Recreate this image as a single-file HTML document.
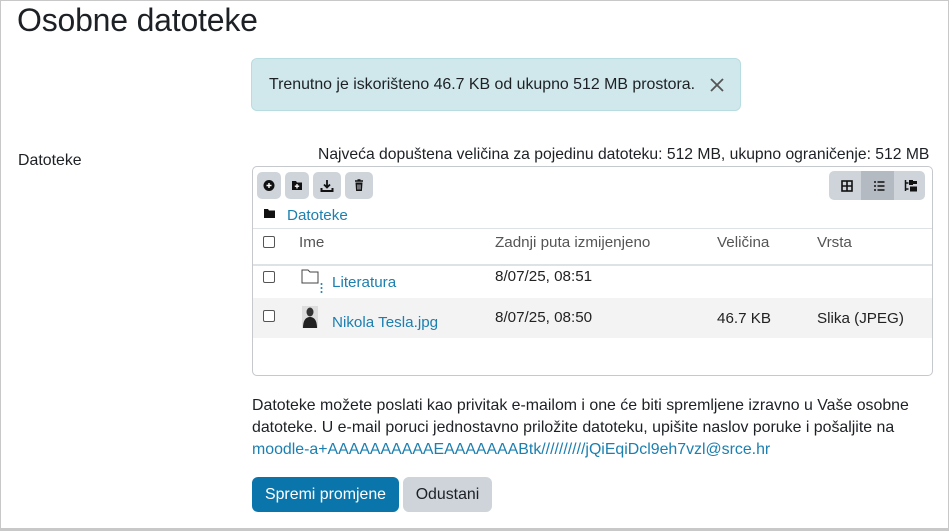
<!DOCTYPE html>
<html><head><meta charset="utf-8"><style>
body{margin:0;width:949px;height:531px;overflow:hidden;font-family:"Liberation Sans",sans-serif;color:#1d2125;background:#fff}
.frame{position:absolute;left:0;top:0;width:947px;height:527px;border:1px solid #c8c8c8;border-bottom:3px solid #c8c8c8}
.abs{position:absolute;white-space:nowrap}
h1{position:absolute;left:17px;top:2px;margin:0;font-weight:400;font-size:32px;letter-spacing:-0.2px}
.alert{position:absolute;left:251px;top:58px;width:490px;height:53px;background:#d0e8eb;border:1px solid #b7dde2;border-radius:6px;box-sizing:border-box}
.fm{position:absolute;left:252px;top:166px;width:681px;height:210px;border:1px solid #c5c8cc;border-radius:5px;box-sizing:border-box}
.btn{position:absolute;top:5px;width:24px;height:27px;background:#ced4da;border-radius:5px}
.cb{position:absolute;width:10px;height:10px;border:1px solid #555;border-radius:2px;background:#fff}
.link{color:#1b7fb0}
.t{font-size:15.2px;color:#222}
</style></head><body>
<div class="frame"></div>
<h1>Osobne datoteke</h1>
<div class="alert">
<div class="abs" style="left:17px;top:17px;font-size:15.9px">Trenutno je iskorišteno 46.7 KB od ukupno 512 MB prostora.</div>
<svg class="abs" style="left:458px;top:19px" width="14" height="14" viewBox="0 0 14 14"><path d="M1 1L13 13M13 1L1 13" stroke="#555" stroke-width="1.8"/></svg>
</div>
<div class="abs" style="left:18px;top:152px;font-size:15.9px">Datoteke</div>
<div class="abs" style="left:318px;top:146px;font-size:15.7px">Najveća dopuštena veličina za pojedinu datoteku: 512 MB, ukupno ograničenje: 512 MB</div>
<div class="fm">
<div class="btn" style="left:4px"><svg width="24" height="27"><circle cx="12" cy="13.5" r="5.5" fill="#111"/><path d="M12 11v5M9.5 13.5h5" stroke="#fff" stroke-width="1.4"/></svg></div>
<div class="btn" style="left:32px"><svg width="24" height="27"><path d="M7 9h4l1 1.5h5v7.5H7z" fill="#111"/><path d="M12 12v4.5M9.8 14.2h4.4" stroke="#fff" stroke-width="1.3"/></svg></div>
<div class="btn" style="left:60px;width:28px"><svg width="28" height="27"><path d="M14 8v7M11 12.5l3 3 3-3" stroke="#111" stroke-width="1.8" fill="none"/><path d="M8.5 16v3h11v-3" stroke="#111" stroke-width="2" fill="none"/></svg></div>
<div class="btn" style="left:92px;width:28px"><svg width="28" height="27"><path d="M10 9h8M12.5 8h3" stroke="#111" stroke-width="1.5"/><path d="M10.5 10.5h7l-.6 8.5h-5.8z" fill="#111"/><path d="M13 12.5v5M15 12.5v5" stroke="#ced4da"/></svg></div>
<div class="btn" style="left:576px;width:96px;top:4px;height:29px;background:#ced4da"></div>
<div class="abs" style="left:608px;top:4px;width:33px;height:29px;background:#b3bac1"></div>
<svg class="abs" style="left:588px;top:13px" width="12" height="12"><rect x="1" y="1" width="10" height="10" fill="none" stroke="#111" stroke-width="1.6"/><path d="M6 1v10M1 6h10" stroke="#111" stroke-width="1.6"/></svg>
<svg class="abs" style="left:620px;top:13px" width="12" height="12"><path d="M1 2h2M1 6h2M1 10h2M4.5 2h7M4.5 6h7M4.5 10h7" stroke="#111" stroke-width="1.5"/></svg>
<svg class="abs" style="left:651px;top:12px" width="14" height="14"><path d="M1.5 1v11M1.5 4h3M1.5 10h3" stroke="#111" stroke-width="1.5"/><rect x="5" y="1" width="4" height="5" fill="#111"/><rect x="6" y="7.5" width="7" height="5" fill="#111"/><rect x="9" y="2" width="4" height="3" fill="#111"/></svg>
<svg class="abs" style="left:11px;top:42px" width="11" height="9"><path d="M0 0h4l1 1.5h6V9H0z" fill="#111"/></svg>
<div class="abs link" style="left:34px;top:40px;font-size:15.2px">Datoteke</div>
<div class="abs" style="left:0;top:61px;width:679px;height:1px;background:#dee2e6"></div>
<div class="cb" style="left:10px;top:69px"></div>
<div class="abs t" style="left:46px;top:67px;color:#555">Ime</div>
<div class="abs t" style="left:242px;top:67px;color:#555">Zadnji puta izmijenjeno</div>
<div class="abs t" style="left:464px;top:67px;color:#555">Veličina</div>
<div class="abs t" style="left:564px;top:67px;color:#555">Vrsta</div>
<div class="abs" style="left:0;top:97px;width:679px;height:2px;background:#dee2e6"></div>
<div class="cb" style="left:10px;top:104px"></div>
<svg class="abs" style="left:48px;top:101px" width="24" height="28"><path d="M1 2h6l2 2h8v11H1z" fill="#fff" stroke="#444" stroke-width="1"/><circle cx="20.5" cy="16" r="1" fill="#1b7fb0"/><circle cx="20.5" cy="20" r="1" fill="#1b7fb0"/><circle cx="20.5" cy="24" r="1" fill="#1b7fb0"/></svg>
<div class="abs link" style="left:79px;top:107px;font-size:15.2px">Literatura</div>
<div class="abs t" style="left:242px;top:101px">8/07/25, 08:51</div>
<div class="abs" style="left:0;top:131px;width:679px;height:40px;background:#f3f3f3"></div>
<div class="cb" style="left:10px;top:143px"></div>
<svg class="abs" style="left:49px;top:139px" width="16" height="22"><rect x="0" y="0" width="16" height="22" fill="#ddd"/><ellipse cx="8" cy="6" rx="3.5" ry="4.5" fill="#333"/><path d="M1 22c0-8 3-11 7-11s7 3 7 11z" fill="#222"/></svg>
<div class="abs link" style="left:79px;top:147px;font-size:15.2px">Nikola Tesla.jpg</div>
<div class="abs t" style="left:242px;top:142px">8/07/25, 08:50</div>
<div class="abs t" style="left:464px;top:143px">46.7 KB</div>
<div class="abs t" style="left:564px;top:143px">Slika (JPEG)</div>
</div>
<div class="abs" style="left:252px;top:395px;font-size:15.9px;line-height:22px">Datoteke možete poslati kao privitak e-mailom i one će biti spremljene izravno u Vaše osobne<br>datoteke. U e-mail poruci jednostavno priložite datoteku, upišite naslov poruke i pošaljite na<br><span class="link">moodle-a+AAAAAAAAAAEAAAAAAABtk//////////jQiEqiDcl9eh7vzl@srce.hr</span></div>
<div class="abs" style="left:252px;top:477px;width:147px;height:35px;background:#0a75aa;border-radius:6px;color:#fff;font-size:15.9px;line-height:35px;text-align:center">Spremi promjene</div>
<div class="abs" style="left:403px;top:477px;width:89px;height:35px;background:#ced4da;border-radius:6px;font-size:15.9px;line-height:35px;text-align:center">Odustani</div>
</body></html>
